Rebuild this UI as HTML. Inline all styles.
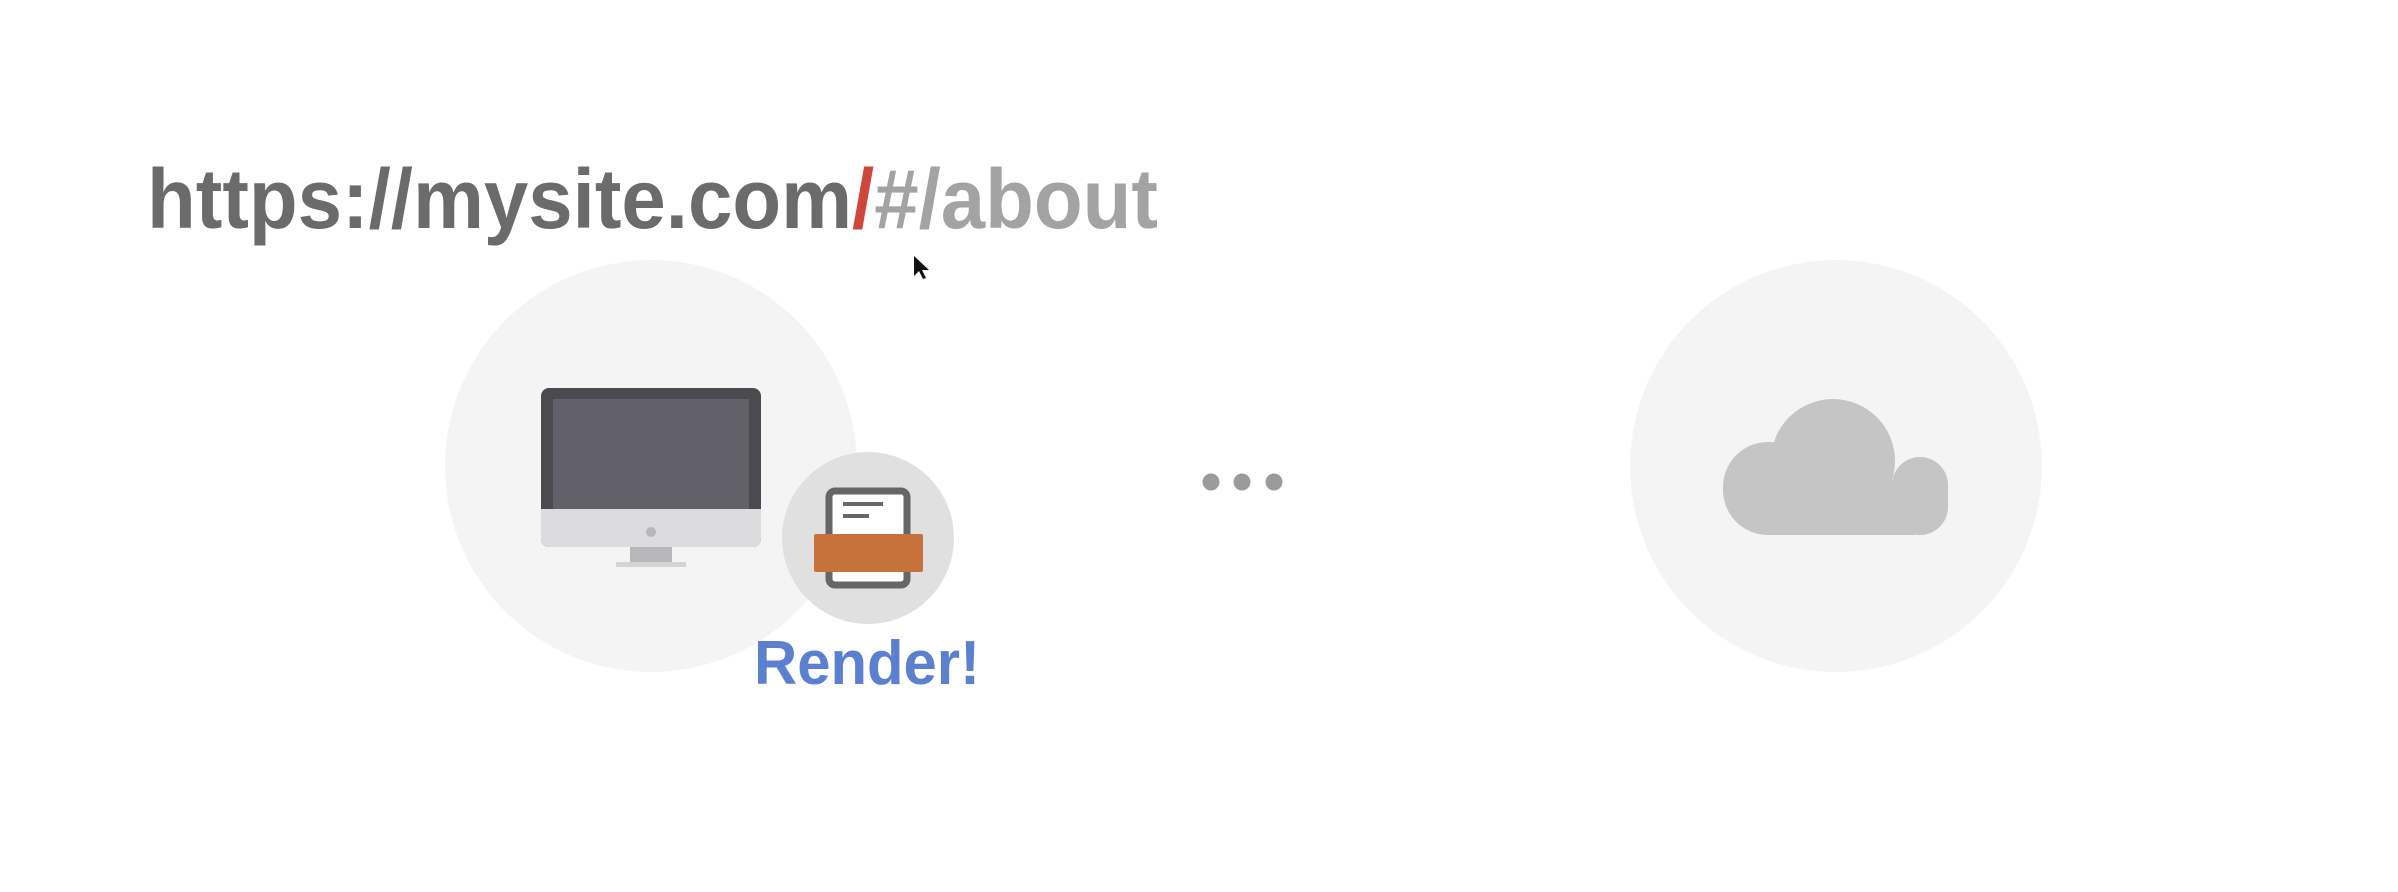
<!DOCTYPE html>
<html><head><meta charset="utf-8"><style>
html,body{margin:0;padding:0;background:#fff;width:2398px;height:892px;overflow:hidden}
svg{display:block}
</style></head><body>
<svg width="2398" height="892" viewBox="0 0 2398 892" xmlns="http://www.w3.org/2000/svg">
<rect width="2398" height="892" fill="#fff"/>
<text x="147" y="228" font-family="Liberation Sans, sans-serif" font-weight="bold" font-size="84" textLength="1011" lengthAdjust="spacingAndGlyphs"><tspan fill="#6b6b6b">https://mysite.com</tspan><tspan fill="#cf463c">/</tspan><tspan fill="#a3a3a3">#/about</tspan></text>
<path d="M914 256 l0 20 l5 -5 l4 8 l3 -1 l-4 -8 l7 0 z" fill="#111"/>
<circle cx="651" cy="466" r="206" fill="#f4f4f4"/>
<rect x="541" y="388" width="220" height="159" rx="8" fill="#4b4b4f"/>
<rect x="553" y="399" width="196" height="110" fill="#626169"/>
<path d="M541 509 h220 v30 a8 8 0 0 1 -8 8 h-204 a8 8 0 0 1 -8 -8 z" fill="#dcdcde"/>
<circle cx="651" cy="532" r="5" fill="#b8b8bb"/>
<rect x="630" y="547" width="42" height="16" fill="#b8b8bb"/>
<rect x="616" y="562" width="70" height="5" fill="#d4d4d6"/>
<circle cx="868" cy="538" r="86" fill="#e0e0e0"/>
<rect x="829" y="491" width="78" height="94" rx="6" fill="#fff" stroke="#666" stroke-width="7"/>
<rect x="843" y="502" width="40" height="4" fill="#666"/>
<rect x="843" y="514" width="26" height="4" fill="#666"/>
<rect x="814" y="534" width="109" height="38" rx="2" fill="#c6723a"/>
<text x="754" y="684" font-family="Liberation Sans, sans-serif" font-weight="bold" font-size="62" fill="#5b80cf" textLength="226" lengthAdjust="spacingAndGlyphs">Render!</text>
<circle cx="1211" cy="482" r="8.5" fill="#9b9b9b"/>
<circle cx="1242" cy="482" r="8.5" fill="#9b9b9b"/>
<circle cx="1274" cy="482" r="8.5" fill="#9b9b9b"/>
<circle cx="1836" cy="466" r="206" fill="#f4f4f4"/>
<g fill="#c5c5c5">
<rect x="1723" y="442" width="90" height="93" rx="45"/>
<circle cx="1833" cy="461" r="62"/>
<rect x="1892" y="457" width="56" height="78" rx="28"/>
<rect x="1765" y="480" width="150" height="55"/>
</g>
</svg>
</body></html>
